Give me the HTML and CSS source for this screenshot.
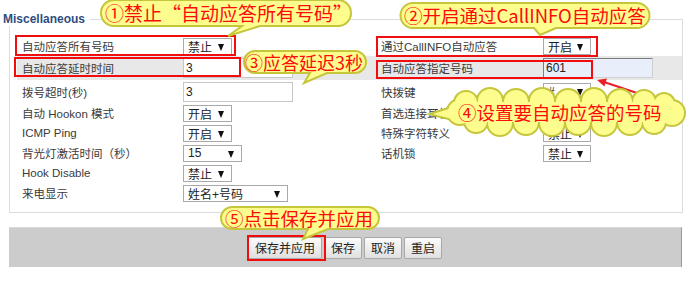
FILE: index.html
```html
<!DOCTYPE html>
<html lang="zh-CN">
<head>
    <meta charset="UTF-8">
    <meta name="viewport" content="width=device-width, initial-scale=1.0">
    <title>Miscellaneous</title>
    <link rel="stylesheet" href="styles.css">
</head>
<body>
    <div class="page">
        <div class="title">Miscellaneous</div>
        <div class="box">
            <div class="grid">
                <div class="lbl">自动应答所有号码</div>
                <div class="ctl"><span class="sel">禁止<i></i></span></div>
                <div class="lbl">通过CallINFO自动应答</div>
                <div class="ctl"><span class="sel sel-r">开启<i></i></span></div>

                <div class="lbl hl">自动应答延时时间</div>
                <div class="ctl hl"><input class="inp" type="text" value="3"></div>
                <div class="lbl hl">自动应答指定号码</div>
                <div class="ctl hl"><input class="inp inp-on" type="text" value="601"></div>

                <div class="lbl">拨号超时(秒)</div>
                <div class="ctl"><input class="inp" type="text" value="3"></div>
                <div class="lbl">快拨键</div>
                <div class="ctl"><span class="sel sel-r">#<i></i></span></div>

                <div class="lbl">自动 Hookon 模式</div>
                <div class="ctl"><span class="sel">开启<i></i></span></div>
                <div class="lbl">首选连接耳机</div>
                <div class="ctl"><span class="sel sel-r">耳机<i></i></span></div>

                <div class="lbl">ICMP Ping</div>
                <div class="ctl"><span class="sel">开启<i></i></span></div>
                <div class="lbl">特殊字符转义</div>
                <div class="ctl"><span class="sel sel-r">禁止<i></i></span></div>

                <div class="lbl">背光灯激活时间（秒）</div>
                <div class="ctl"><span class="sel sel-15">15<i></i></span></div>
                <div class="lbl">话机锁</div>
                <div class="ctl"><span class="sel sel-r">禁止<i></i></span></div>

                <div class="lbl">Hook Disable</div>
                <div class="ctl"><span class="sel">禁止<i></i></span></div>
                <div class="lbl"></div>
                <div class="ctl"></div>

                <div class="lbl">来电显示</div>
                <div class="ctl"><span class="sel sel-name">姓名+号码<i></i></span></div>
                <div class="lbl"></div>
                <div class="ctl"></div>
            </div>
        </div>
        <div class="actions">
            <button class="btn">保存并应用</button>
            <button class="btn">保存</button>
            <button class="btn">取消</button>
            <button class="btn">重启</button>
        </div>

        <!-- annotations drawn over the page -->
        <div class="mark m1"></div>
        <div class="mark m2"></div>
        <div class="mark m3"></div>
        <div class="mark m4"></div>
        <div class="mark m5"></div>

        <svg class="arrow" width="686" height="283" viewBox="0 0 686 283">
            <line x1="637" y1="93" x2="604" y2="82" stroke="#e8202a" stroke-width="2"/>
            <polygon points="597,80 607,78.6 604.4,86.4" fill="#e8202a"/>
        </svg>

        <div class="callout c1">
            <svg width="252" height="28" viewBox="0 0 252 28">
                <path d="M14,1 H238 A13,13 0 0 1 238,27 H160 L128,37 L142,27 H14 A13,13 0 0 1 14,1 Z" class="shape"/>
            </svg>
            <span>①禁止<q>“</q>自动应答所有号码<q>”</q></span>
        </div>

        <div class="callout c2">
            <svg width="250" height="27" viewBox="0 0 250 27">
                <path d="M13,1 H237 A12.5,12.5 0 0 1 237,26 H156 L140,33 L134,26 H13 A12.5,12.5 0 0 1 13,1 Z" class="shape"/>
            </svg>
            <span>②开启通过CallINFO自动应答</span>
        </div>

        <div class="callout c3">
            <svg width="124" height="24" viewBox="0 0 124 24">
                <path d="M12,1 H112 A11,11 0 0 1 112,23 H84 L61,33 L67,23 H12 A11,11 0 0 1 12,1 Z" class="shape"/>
            </svg>
            <span>③应答延迟3秒</span>
        </div>

        <div class="callout c4">
            <svg width="254" height="44" viewBox="0 0 254 44">
                <defs>
                    <g id="cloud">
                        <polygon points="1,24 32,14 32,32"/>
                        <circle cx="28" cy="22" r="12"/>
                        <circle cx="34" cy="13" r="11"/>
                        <circle cx="58" cy="11" r="12"/>
                        <circle cx="84" cy="12" r="12"/>
                        <circle cx="110" cy="11" r="12"/>
                        <circle cx="136" cy="12" r="12"/>
                        <circle cx="162" cy="11" r="12"/>
                        <circle cx="188" cy="12" r="12"/>
                        <circle cx="212" cy="12" r="11"/>
                        <circle cx="232" cy="14" r="10"/>
                        <circle cx="240" cy="23" r="12"/>
                        <circle cx="44" cy="31" r="11"/>
                        <circle cx="68" cy="33" r="12"/>
                        <circle cx="94" cy="32" r="12"/>
                        <circle cx="120" cy="33" r="12"/>
                        <circle cx="146" cy="32" r="12"/>
                        <circle cx="172" cy="33" r="12"/>
                        <circle cx="198" cy="32" r="12"/>
                        <circle cx="222" cy="32" r="11"/>
                        <rect x="28" y="12" width="212" height="20"/>
                    </g>
                </defs>
                <use href="#cloud" class="cloud-edge"/>
                <use href="#cloud" class="cloud-fill"/>
            </svg>
            <span>④设置要自动应答的号码</span>
        </div>

        <div class="callout c5">
            <svg width="160" height="24" viewBox="0 0 160 24">
                <path d="M12,1 H148 A11,11 0 0 1 148,23 H108 L83,33 L88,23 H12 A11,11 0 0 1 12,1 Z" class="shape"/>
            </svg>
            <span>⑤点击保存并应用</span>
        </div>
    </div>
</body>
</html>
```

FILE: styles.css
```css
* {
    margin: 0;
    padding: 0;
    box-sizing: border-box;
}
html, body {
    width: 100%;
    height: 100%;
    background: #fff;
    font-family: "Liberation Sans", "Noto Sans CJK SC", sans-serif;
    font-size: 12px;
    color: #333;
}
.page {
    position: relative;
    width: 686px;
    height: 283px;
    overflow: hidden;
}
.title {
    position: relative;
    z-index: 1;
    width: fit-content;
    margin: 12px 0 0 3px;
    padding-right: 5px;
    background: #fff;
    line-height: 14px;
    font-weight: bold;
    color: #2f4c80;
}
.box {
    margin: -7px 3px 0 9px;
    border: 1px solid #dcdcdc;
    padding: 16px 0 9px 7px;
}
.grid {
    display: grid;
    grid-template-columns: 166px 193px 167px 1fr;
    grid-template-rows: 20px 24px 23px repeat(5, 20px);
}
.lbl {
    display: flex;
    align-items: center;
    padding-left: 5px;
    font-size: 11.5px;
    white-space: nowrap;
    color: #3a3a3a;
}
.ctl {
    display: flex;
    align-items: center;
}
.hl {
    background: #e8e8e8;
}
.sel {
    position: relative;
    display: inline-flex;
    align-items: center;
    width: 49px;
    height: 17px;
    padding-left: 4px;
    border: 1px solid #a9a9a9;
    background: #fff;
    font-size: 12px;
    color: #222;
}
.sel i {
    position: absolute;
    right: 7px;
    top: 5px;
    border-left: 3.5px solid transparent;
    border-right: 3.5px solid transparent;
    border-top: 7px solid #111;
}
.sel-r {
    width: 48px;
}
.sel-15 {
    width: 59px;
}
.sel-name {
    width: 105px;
}
.inp {
    width: 110px;
    height: 20px;
    padding-left: 2px;
    border: 1px solid #c6c6c6;
    background: #fff;
    font-family: "Liberation Sans", sans-serif;
    font-size: 12px;
    color: #222;
    outline: none;
}
.inp-on {
    background: #e8eefa;
    border-color: #7d7d7d #cfcfcf #cfcfcf #7d7d7d;
}
.actions {
    display: flex;
    justify-content: center;
    align-items: center;
    gap: 2px;
    height: 40px;
    margin: 14px 4px 0 9px;
    background: #cccccc;
    border-top: 1px solid #d9d9d9;
    border-right: 1px solid #9a9a9a;
}
.btn {
    height: 22px;
    padding: 0 6px;
    border: 1px solid #a8a8a8;
    border-radius: 2px;
    background: linear-gradient(#fbfbfb, #e0e0e0);
    font-family: "Noto Sans CJK SC", sans-serif;
    font-size: 12px;
    color: #222;
}

/* red frames */
.mark {
    position: absolute;
    border: 2px solid #f10d0d;
}
.m1 { left: 15px; top: 35px; width: 221px; height: 21px; }
.m2 { left: 14px; top: 57px; width: 227px; height: 20px; }
.m3 { left: 376px; top: 36px; width: 222px; height: 21px; }
.m4 { left: 376px; top: 60px; width: 217px; height: 19px; }
.m5 { left: 247px; top: 235px; width: 79px; height: 26px; }

.arrow {
    position: absolute;
    left: 0;
    top: 0;
    pointer-events: none;
}

/* yellow callouts */
.callout {
    position: absolute;
    font-family: "Noto Sans CJK SC", sans-serif;
    color: #ff0a0a;
    white-space: nowrap;
}
.callout svg {
    position: absolute;
    left: 0;
    top: 0;
    overflow: visible;
}
.callout span {
    position: relative;
    display: block;
}
.callout q {
    quotes: none;
    font-feature-settings: "fwid" 1;
}
.shape {
    fill: #fdfd8e;
    stroke: #c6c63c;
    stroke-width: 2;
}
.cloud-edge {
    fill: #fdfd8e;
    stroke: #c6c63c;
    stroke-width: 4;
}
.cloud-fill {
    fill: #fdfd8e;
}
.c1 { left: 100px; top: -1px; width: 252px; height: 28px; }
.c1 span { padding-left: 5px; line-height: 28px; font-size: 19px; }
.c2 { left: 400px; top: 2px; width: 250px; height: 27px; }
.c2 span { padding-left: 4px; line-height: 27px; font-size: 18.5px; }
.c3 { left: 243px; top: 50px; width: 124px; height: 24px; }
.c3 span { padding-left: 2px; line-height: 24px; font-size: 18px; }
.c4 { left: 432px; top: 90px; width: 254px; height: 44px; }
.c4 span { padding-left: 26px; line-height: 44px; font-size: 18.5px; }
.c5 { left: 220px; top: 206px; width: 160px; height: 24px; }
.c5 span { padding-left: 5px; line-height: 24px; font-size: 18.5px; }
```
